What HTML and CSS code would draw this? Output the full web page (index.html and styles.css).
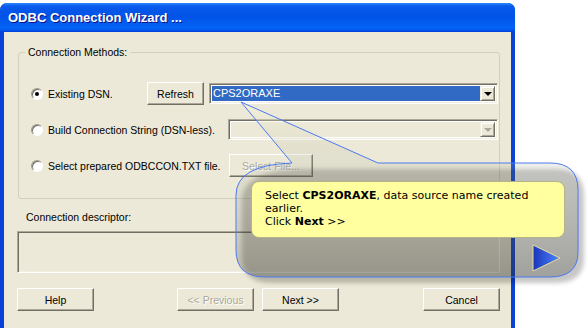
FILE: index.html
```html
<!DOCTYPE html>
<html lang="en">
<head>
    <meta charset="UTF-8">
    <title>ODBC Connection Wizard</title>
    <link rel="stylesheet" href="styles.css">
</head>
<body>

<div class="window">
    <div class="titlebar">ODBC Connection Wizard ...</div>
    <div class="client">
        <fieldset class="group">
            <legend>Connection Methods:</legend>
            <div class="row">
                <label class="choice choice-dsn"><span class="radio checked"></span>Existing DSN.</label>
                <button class="btn btn-refresh">Refresh</button>
                <div class="combo">
                    <div class="combo-value selected">CPS2ORAXE</div>
                    <div class="combo-btn"><span class="arrow"></span></div>
                </div>
            </div>
            <div class="row">
                <label class="choice choice-build"><span class="radio"></span>Build Connection String (DSN-less).</label>
                <div class="combo">
                    <div class="combo-value disabled"></div>
                    <div class="combo-btn"><span class="arrow grey"></span></div>
                </div>
            </div>
            <div class="row">
                <label class="choice choice-file"><span class="radio"></span>Select prepared ODBCCON.TXT file.</label>
                <button class="btn btn-file" disabled>Select File...</button>
            </div>
        </fieldset>

        <div class="desc-label">Connection descriptor:</div>
        <div class="desc-box"></div>

        <div class="buttons">
            <button class="btn btn-wide">Help</button>
            <span class="spacer"></span>
            <button class="btn btn-wide" disabled>&lt;&lt; Previous</button>
            <button class="btn btn-wide btn-next">Next &gt;&gt;</button>
            <span class="spacer"></span>
            <button class="btn btn-wide">Cancel</button>
        </div>
    </div>
</div>

<!-- tip bubble drawn over the dialog -->
<div class="callout">
    <svg class="bubble" width="588" height="332" viewBox="0 0 588 332">
        <defs>
            <linearGradient id="bubbleFill" gradientUnits="userSpaceOnUse" x1="0" y1="102" x2="0" y2="277">
                <stop offset="0" stop-color="rgb(255,255,215)" stop-opacity="0.35"/>
                <stop offset="0.4" stop-color="rgb(170,170,155)" stop-opacity="0.18"/>
                <stop offset="1" stop-color="rgb(70,70,60)" stop-opacity="0.3"/>
            </linearGradient>
            <linearGradient id="playFill" x1="0" y1="0" x2="1" y2="0">
                <stop offset="0" stop-color="#1a36b8"/>
                <stop offset="1" stop-color="#4f86ff"/>
            </linearGradient>
            <filter id="soft" x="-10%" y="-10%" width="120%" height="130%">
                <feGaussianBlur stdDeviation="2"/>
            </filter>
        </defs>
        <path class="bubble-shadow" filter="url(#soft)" transform="translate(6,6)"
              d="M 378 163 L 550 163 Q 578 163 578 190 L 578 252 Q 578 277 550 277 L 265 277 Q 236 277 236 250 L 236 195 Q 236 165 292 163 Z"/>
        <path class="bubble-body"
              d="M 241 102 L 378 163 L 550 163 Q 578 163 578 190 L 578 252 Q 578 277 550 277 L 265 277 Q 236 277 236 250 L 236 195 Q 236 165 292 163 Z"/>
        <polygon class="play" points="533,245 560,258 533,271"/>
    </svg>
    <div class="note">
        <p>Select <b>CPS2ORAXE</b>, data source name created</p>
        <p>earlier.</p>
        <p>Click <b>Next</b> &gt;&gt;</p>
    </div>
</div>

</body>
</html>
```

FILE: styles.css
```css
body {
    margin: 0;
    width: 588px;
    height: 332px;
    background-color: white;
    font-family: "Liberation Sans", Arial, sans-serif;
    font-size: 10.5px;
    color: black;
    overflow: hidden;
}
.window {
    width: 515px;
    margin-top: 3px;
    background-color: #0841d8;
    border-radius: 7px 7px 0 0;
}
.titlebar {
    height: 29px;
    line-height: 29px;
    padding-left: 8px;
    color: white;
    font-weight: bold;
    font-size: 13px;
    text-shadow: 1px 1px #0f1089;
    border-radius: 7px 7px 0 0;
    background: linear-gradient(#2d8cff 0, #0a5aeb 10%, #0053e6 45%, #0563f5 85%, #0258f0 93%, #003dd7 100%);
}
.client {
    height: 296px;
    margin: 0 4px 4px 4px;
    background-color: #ece9d8;
    display: flex;
    flex-direction: column;
}
.group {
    margin: 14px 11px 0 14px;
    padding: 23px 1px 21px 12px;
    border: 1px solid #d0d0bf;
    border-radius: 3px;
    display: flex;
    flex-direction: column;
    gap: 13px;
}
.group legend {
    height: 13px;
    line-height: 13px;
    padding: 0 3px;
    margin-left: -6px;
}
.row {
    height: 23px;
    display: flex;
    align-items: center;
}
.choice {
    display: flex;
    align-items: center;
    gap: 5px;
    flex-shrink: 0;
}
.choice-dsn { width: 116px; }
.choice-build { width: 197px; }
.choice-file { width: 198px; }
.radio {
    width: 10px;
    height: 10px;
    border: 1px solid;
    border-color: #9d9a8c #fff #fff #9d9a8c;
    border-radius: 50%;
    background-color: white;
    box-shadow: inset 1px 1px #716f64;
    position: relative;
}
.radio.checked::after {
    content: "";
    position: absolute;
    left: 3px;
    top: 3px;
    width: 4px;
    height: 4px;
    border-radius: 50%;
    background-color: black;
}
.btn {
    font-family: inherit;
    font-size: 10.5px;
    color: black;
    background-color: #ece9d8;
    border: 1px solid;
    border-color: #fff #716f64 #716f64 #fff;
    box-shadow: inset -1px -1px #aca899;
    height: 23px;
    padding: 0;
}
.btn:disabled {
    color: #aca899;
    text-shadow: 1px 1px #fff;
}
.btn-refresh {
    width: 57px;
    margin-right: 5px;
    flex-shrink: 0;
}
.btn-file {
    width: 84px;
}
.combo {
    flex: 1;
    height: 21px;
    box-sizing: border-box;
    border: 1px solid;
    border-color: #aca899 #fff #fff #aca899;
    box-shadow: inset 1px 1px #716f64, inset -1px -1px #f1efe2;
    padding: 2px;
    display: flex;
    background-color: white;
}
.combo-value {
    flex: 1;
    height: 15px;
    line-height: 15px;
    padding-left: 1px;
    font-size: 11px;
}
.combo-value.selected {
    background-color: #316ac5;
    color: white;
}
.combo-value.disabled {
    background-color: #ece9d8;
}
.combo-btn {
    width: 13px;
    height: 13px;
    background-color: #ece9d8;
    border: 1px solid;
    border-color: #f1efe2 #716f64 #716f64 #f1efe2;
    box-shadow: inset 1px 1px #fff, inset -1px -1px #aca899;
    display: flex;
    align-items: center;
    justify-content: center;
}
.arrow {
    width: 0;
    height: 0;
    border-left: 4px solid transparent;
    border-right: 4px solid transparent;
    border-top: 4px solid black;
    margin-top: 1px;
}
.arrow.grey {
    border-top-color: #aca899;
}
.desc-label {
    margin: 12px 0 0 22px;
    height: 13px;
    line-height: 13px;
}
.desc-box {
    margin: 7px 11px 0 13px;
    height: 40px;
    border: 1px solid;
    border-color: #aca899 #fff #fff #aca899;
    box-shadow: inset 1px 1px #716f64, inset -1px -1px #f1efe2;
}
.buttons {
    margin: 15px 11px 0 13px;
    display: flex;
    gap: 8px;
}
.btn-wide {
    width: 77px;
}
.spacer {
    flex: 1;
}
.buttons .spacer:first-of-type {
    flex: none;
    width: 67px;
}

/* callout */
.callout {
    position: absolute;
    left: 0;
    top: 0;
    width: 588px;
    height: 332px;
    pointer-events: none;
}
.bubble {
    display: block;
}
.bubble-shadow {
    fill: rgba(0, 0, 0, 0.22);
}
.bubble-body {
    fill: url(#bubbleFill);
    stroke: #4d78f0;
    stroke-width: 1;
}
.play {
    fill: url(#playFill);
    stroke: #e6dd9a;
    stroke-width: 1;
}
.note {
    position: absolute;
    left: 251px;
    top: 181px;
    width: 286px;
    height: 44px;
    padding: 7px 13px 4px 13px;
    background-color: #ffffa0;
    border: 1px solid #b4b48a;
    border-radius: 8px;
    font-family: "DejaVu Sans", Verdana, sans-serif;
    font-size: 11px;
    line-height: 13px;
}
.note p {
    margin: 0;
    white-space: nowrap;
}
```
